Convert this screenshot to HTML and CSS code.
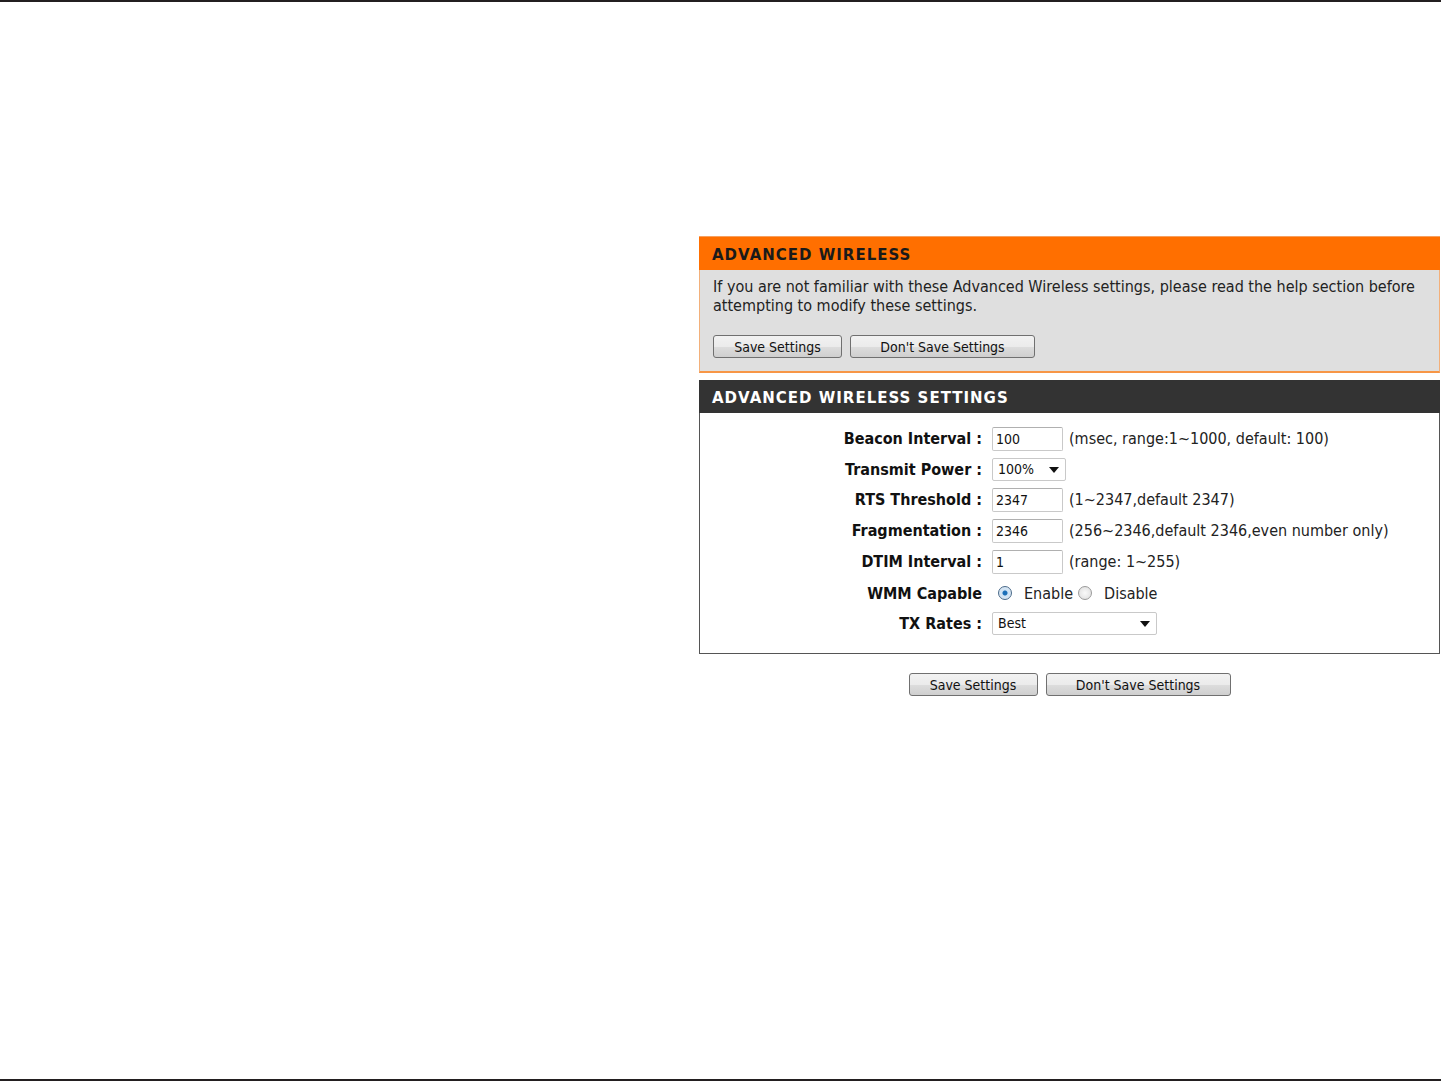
FILE: index.html
```html
<!DOCTYPE html>
<html lang="en">
<head>
    <meta charset="UTF-8">
    <title>Advanced Wireless</title>
    <link rel="stylesheet" href="styles.css">
</head>
<body>
    <div class="page">
        <div class="panel">
            <div class="box intro">
                <h2 class="box-title orange">ADVANCED WIRELESS</h2>
                <div class="intro-body">
                    <p>If you are not familiar with these Advanced Wireless settings, please read the help section before attempting to modify these settings.</p>
                    <div class="btn-row">
                        <button class="btn btn-save">Save Settings</button>
                        <button class="btn btn-nosave">Don't Save Settings</button>
                    </div>
                </div>
            </div>

            <div class="box settings">
                <h2 class="box-title dark">ADVANCED WIRELESS SETTINGS</h2>
                <div class="settings-body">
                    <div class="row">
                        <label class="label">Beacon Interval :</label>
                        <div class="field"><input class="text-in" type="text" value="100"><span class="hint">(msec, range:1~1000, default: 100)</span></div>
                    </div>
                    <div class="row">
                        <label class="label">Transmit Power :</label>
                        <div class="field"><div class="select small">100%<span class="arrow"></span></div></div>
                    </div>
                    <div class="row">
                        <label class="label">RTS Threshold :</label>
                        <div class="field"><input class="text-in" type="text" value="2347"><span class="hint">(1~2347,default 2347)</span></div>
                    </div>
                    <div class="row">
                        <label class="label">Fragmentation :</label>
                        <div class="field"><input class="text-in" type="text" value="2346"><span class="hint">(256~2346,default 2346,even number only)</span></div>
                    </div>
                    <div class="row">
                        <label class="label">DTIM Interval :</label>
                        <div class="field"><input class="text-in" type="text" value="1"><span class="hint">(range: 1~255)</span></div>
                    </div>
                    <div class="row">
                        <label class="label">WMM Capable</label>
                        <div class="field">
                            <span class="radio checked"></span><span class="radio-text">Enable</span>
                            <span class="radio"></span><span class="radio-text">Disable</span>
                        </div>
                    </div>
                    <div class="row">
                        <label class="label">TX Rates :</label>
                        <div class="field"><div class="select wide">Best<span class="arrow"></span></div></div>
                    </div>
                </div>
            </div>

            <div class="btn-row bottom">
                <button class="btn btn-save">Save Settings</button>
                <button class="btn btn-nosave">Don't Save Settings</button>
            </div>
        </div>
    </div>
</body>
</html>
```

FILE: styles.css
```css
html, body {
    height: 100%;
}
body {
    margin: 0;
    background-color: #fff;
    color: #222;
    font-family: "DejaVu Sans Condensed", "DejaVu Sans", sans-serif;
    font-size: 16px;
    border-top: 2px solid #231f20;
    border-bottom: 2px solid #231f20;
    box-sizing: border-box;
}
.page {
    padding: 234px 0 0 699px;
}
.panel {
    width: 741px;
}
.box-title {
    margin: 0;
    height: 33px;
    line-height: 36px;
    padding-left: 13px;
    font-family: "DejaVu Sans", sans-serif;
    font-size: 15px;
    font-weight: bold;
    letter-spacing: 1px;
}
.orange {
    background-color: #ff6f00;
    border-top: 1px solid #f7a060;
    color: #1a1a1a;
}
.dark {
    background-color: #333;
    color: #fff;
}
.intro-body {
    background-color: #dfdfdf;
    border-bottom: 2px solid #f79646;
    border-left: 1px solid #f3b07a;
    border-right: 1px solid #f3b07a;
    padding: 7px 13px 14px 13px;
    box-sizing: border-box;
    height: 103px;
}
.intro-body p {
    margin: 0;
    line-height: 19px;
    color: #222;
}
.btn-row {
    display: flex;
    gap: 8px;
    margin-top: 20px;
}
.btn {
    height: 23px;
    padding: 0;
    font-family: "DejaVu Sans Condensed", "DejaVu Sans", sans-serif;
    font-size: 14px;
    color: #111;
    border: 1px solid #707070;
    border-radius: 3px;
    background: linear-gradient(#f2f2f2 0%, #ebebeb 50%, #dddddd 51%, #cfcfcf 100%);
}
.btn-save {
    width: 129px;
}
.btn-nosave {
    width: 185px;
}
.settings {
    margin-top: 7px;
}
.settings-body {
    border: 1px solid #555;
    border-top: none;
    padding: 10px 0 16px 0;
}
.row {
    display: flex;
    align-items: center;
    height: 31px;
}
.row:nth-child(2) {
    height: 30px;
}
.row:nth-child(6) {
    height: 32px;
}
.row:nth-child(7) {
    height: 28px;
}
.label {
    width: 292px;
    text-align: right;
    font-weight: bold;
    color: #111;
    padding-right: 10px;
    box-sizing: border-box;
}
.field {
    display: flex;
    align-items: center;
}
.text-in {
    width: 71px;
    height: 24px;
    box-sizing: border-box;
    border: 1px solid #c9c9c9;
    border-top-color: #b0b0b0;
    border-radius: 2px;
    padding: 0 3px;
    font-family: "DejaVu Sans Condensed", "DejaVu Sans", sans-serif;
    font-size: 14px;
    color: #111;
}
.hint {
    margin-left: 6px;
    color: #222;
}
.select {
    position: relative;
    height: 23px;
    line-height: 21px;
    box-sizing: border-box;
    border: 1px solid #c9c9c9;
    border-radius: 2px;
    padding-left: 5px;
    font-size: 14px;
    color: #111;
}
.select.small {
    width: 74px;
}
.select.wide {
    width: 165px;
}
.arrow {
    position: absolute;
    right: 6px;
    top: 8px;
    border-left: 5px solid transparent;
    border-right: 5px solid transparent;
    border-top: 6px solid #111;
}
.radio {
    width: 14px;
    height: 14px;
    border-radius: 50%;
    border: 1px solid #9a9a9a;
    background: radial-gradient(#fafafa, #dcdcdc);
    box-sizing: border-box;
}
.radio.checked {
    margin-left: 6px;
    border-color: #4a6a8a;
    background: radial-gradient(#1c6fb8 0, #1c6fb8 2px, #cfe3f5 3px, #dfe8f0 100%);
}
.radio-text {
    margin-left: 12px;
    margin-right: 5px;
}
.bottom {
    justify-content: center;
    margin-top: 19px;
}
```
